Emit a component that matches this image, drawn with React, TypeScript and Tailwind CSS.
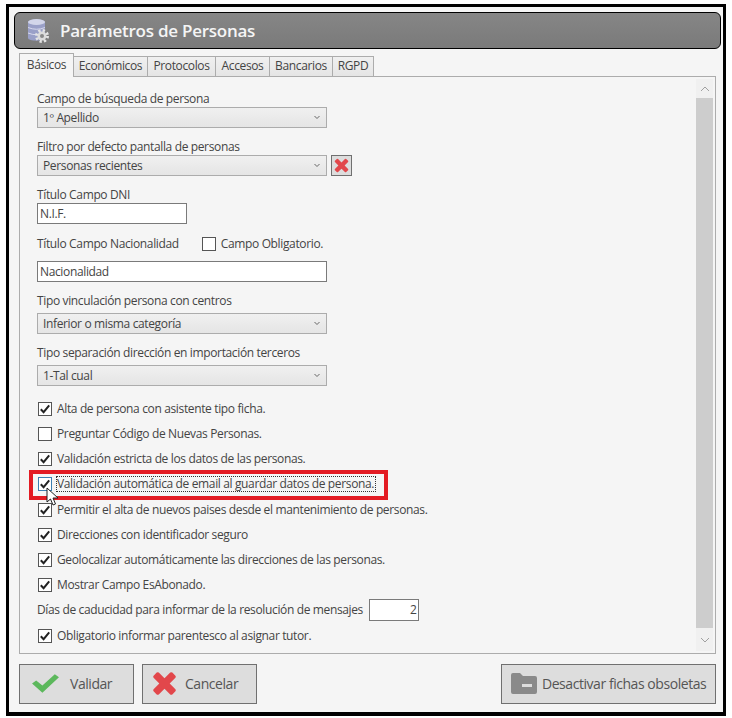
const font = { fontFamily: '"Open Sans", sans-serif' };

function Label({ children, className = '' }: { children: React.ReactNode; className?: string }) {
    return <div className={`h-4 text-[12px] leading-4 tracking-[-0.36px] text-[#444] whitespace-nowrap ${className}`}>{children}</div>;
}

function Select({ value, className = '' }: { value: string; className?: string }) {
    return (
        <div className={`flex h-[21px] w-[290px] items-center justify-between border border-[#acacac] bg-gradient-to-b from-[#f0f0f0] to-[#e5e5e5] pl-[5px] pr-[4px] text-[12px] tracking-[-0.36px] text-[#444] ${className}`}>
            <span>{value}</span>
            <svg width="6" height="5" viewBox="0 0 6 5" className="mr-[2px]">
                <path d="M.5 1 L3 3.500 L5.500 1" fill="none" stroke="#666" strokeWidth="1" />
            </svg>
        </div>
    );
}

function TextBox({ value, className = '' }: { value: string; className?: string }) {
    return (
        <div className={`flex h-[21px] items-center border border-[#7a7a7a] bg-white px-[2px] text-[12px] tracking-[-0.36px] text-[#444] ${className}`}>
            {value}
        </div>
    );
}

function Box({ checked = true, hover = false }: { checked?: boolean; hover?: boolean }) {
    return (
        <div className={`flex h-[14px] w-[14px] shrink-0 items-center justify-center border bg-white ${hover ? 'border-[#3c7fb1]' : 'border-[#555]'}`}>
            {checked && (
                <svg width="12" height="12" viewBox="0 0 12 12">
                    <path d="M1.800 6.200 L4.600 9.200 L10.200 2.400" fill="none" stroke="#222" strokeWidth="2" />
                </svg>
            )}
        </div>
    );
}

function Check({ text, checked = true, hover = false, className = '' }: { text: string; checked?: boolean; hover?: boolean; className?: string }) {
    return (
        <div className={`flex h-[16px] items-center pl-[1px] ${className}`}>
            <Box checked={checked} hover={hover} />
            <span className="ml-[5px] text-[12px] leading-4 tracking-[-0.36px] text-[#444] whitespace-nowrap">{text}</span>
        </div>
    );
}

function Tab({ text, width, active = false }: { text: string; width: string; active?: boolean }) {
    return (
        <div
            className={`flex items-center justify-center border border-[#acacac] pb-[1px] text-[12px] tracking-[-0.36px] text-[#444] ${width} ${
                active ? 'z-10 h-[24px] border-b-0 bg-[#f5f5f5]' : 'mt-[3px] h-[21px] bg-gradient-to-b from-[#f0f0f0] to-[#e5e5e5]'
            }`}
        >
            {text}
        </div>
    );
}

function Cross({ size }: { size: number }) {
    return (
        <svg width={size} height={size} viewBox="0 0 24 24">
            <path
                d="M6.500 1.500 L12 7 L17.500 1.500 Q18.500 .7 19.500 1.500 L22.500 4.500 Q23.300 5.500 22.500 6.500 L17 12 L22.500 17.500 Q23.300 18.500 22.500 19.500 L19.500 22.500 Q18.500 23.300 17.500 22.500 L12 17 L6.500 22.500 Q5.500 23.300 4.500 22.500 L1.500 19.500 Q.7 18.500 1.500 17.500 L7 12 L1.500 6.500 Q.7 5.500 1.500 4.500 L4.500 1.500 Q5.500 .7 6.500 1.500 Z"
                fill="#e2474b"
            />
        </svg>
    );
}

function ActionButton({ className, children }: { className: string; children: React.ReactNode }) {
    return (
        <div className={`flex h-10 items-center border border-[#707070] bg-[#dddddd] pb-[2px] text-[14px] tracking-[-0.45px] text-[#555] ${className}`}>
            {children}
        </div>
    );
}

export default function App() {
    return (
        <div className="h-[718px] w-[732px] bg-white pl-[6px] pt-[4px]" style={font}>
            <div className="relative h-[712px] w-[720px] border-[3px] border-b-[4px] border-black bg-[#f5f5f5] px-[5px] pt-[5px]">
                <div className="flex h-[37px] w-[707px] items-center rounded-[6px] border border-black bg-gradient-to-b from-[#868686] to-[#7a7a7a] pl-[12px]">
                    <svg width="23" height="26" viewBox="0 0 23 26">
                        <path d="M1 4 C1 .5 18 .5 18 4 L18 20 C18 23.500 1 23.500 1 20 Z" fill="#9aa0c8" />
                        <ellipse cx="9.500" cy="4" rx="8.500" ry="3" fill="#d3d6ea" />
                        <path d="M1 9.500 Q9.500 13 18 9.500 M1 15 Q9.500 18.500 18 15" fill="none" stroke="#d8daee" strokeWidth="1" />
                        <circle cx="15" cy="18" r="5.500" fill="none" stroke="#e4e4e4" strokeWidth="3" strokeDasharray="2.200 2.120" />
                        <circle cx="15" cy="18" r="4.500" fill="#dcdcdc" />
                        <circle cx="15" cy="18" r="2" fill="#8a8a8a" />
                    </svg>
                    <span className="ml-[10px] text-[17px] font-semibold tracking-[-0.25px] text-[#f5f5f5]">Parámetros de Personas</span>
                </div>

                <div className="relative ml-[5px] mt-[4px] flex h-[24px] gap-0">
                    <Tab text="Básicos" width="w-[55px]" active />
                    <Tab text="Económicos" width="w-[75px] -ml-[1px]" />
                    <Tab text="Protocolos" width="w-[69px] -ml-[1px]" />
                    <Tab text="Accesos" width="w-[55px] -ml-[1px]" />
                    <Tab text="Bancarios" width="w-[64px] -ml-[1px]" />
                    <Tab text="RGPD" width="w-[42px] -ml-[1px]" />
                </div>

                <div className="relative ml-[5px] -mt-[1px] flex h-[578px] w-[697px] border border-[#acacac] bg-[#f5f5f5]">
                    <div className="w-[676px] pl-[17px]">
                        <Label className="mt-[14px]">Campo de búsqueda de persona</Label>
                        <Select value="1º Apellido" />
                        <Label className="mt-[11px]">Filtro por defecto pantalla de personas</Label>
                        <div className="flex items-center gap-[4px]">
                            <Select value="Personas recientes" />
                            <div className="flex h-[21px] w-[21px] items-center justify-center border border-[#707070] bg-[#dddddd]">
                                <Cross size={15} />
                            </div>
                        </div>
                        <Label className="mt-[11px]">Título Campo DNI</Label>
                        <TextBox value="N.I.F." className="w-[150px]" />
                        <div className="mt-[12px] flex h-[16px] items-center">
                            <Label>Título Campo Nacionalidad</Label>
                            <div className="ml-[23px]"><Box checked={false} /></div>
                            <Label className="ml-[5px]">Campo Obligatorio.</Label>
                        </div>
                        <TextBox value="Nacionalidad" className="mt-[9px] w-[290px]" />
                        <Label className="mt-[11px]">Tipo vinculación persona con centros</Label>
                        <Select value="Inferior o misma categoría" className="mt-[4px]" />
                        <Label className="mt-[11px]">Tipo separación dirección en importación terceros</Label>
                        <Select value="1-Tal cual" className="mt-[4px]" />

                        <Check text="Alta de persona con asistente tipo ficha." className="mt-[15px]" />
                        <Check text="Preguntar Código de Nuevas Personas." checked={false} className="mt-[9px]" />
                        <Check text="Validación estricta de los datos de las personas." className="mt-[9px]" />
                        <div className="relative mt-[9px]">
                            <Check text="Validación automática de email al guardar datos de persona." hover />
                            <div className="absolute left-[19px] top-[0px] h-[16px] w-[320px] border border-dotted border-[#333]" />
                        </div>
                        <Check text="Permitir el alta de nuevos paises desde el mantenimiento de personas." className="mt-[10px]" />
                        <Check text="Direcciones con identificador seguro" className="mt-[9px]" />
                        <Check text="Geolocalizar automáticamente las direcciones de las personas." className="mt-[9px]" />
                        <Check text="Mostrar Campo EsAbonado." className="mt-[9px]" />
                        <div className="mt-[6px] flex h-[22px] items-center">
                            <Label>Días de caducidad para informar de la resolución de mensajes</Label>
                            <div className="ml-[6px] flex h-[22px] w-[50px] items-center justify-end border border-[#7a7a7a] bg-white pr-[1px] text-[12px] text-[#444]">2</div>
                        </div>
                        <Check text="Obligatorio informar parentesco al asignar tutor." className="mt-[7px]" />
                    </div>
                    <div className="mt-[2px] flex h-[572px] w-[17px] flex-col items-center bg-[#f0f0f0]">
                        <div className="flex h-[19px] items-center">
                            <svg width="10" height="6" viewBox="0 0 10 6"><path d="M1 5 L5 1 L9 5" fill="none" stroke="#a0a0a0" strokeWidth="1" /></svg>
                        </div>
                        <div className="h-[530px] w-full bg-[#cdcdcd]" />
                        <div className="flex h-[23px] items-center">
                            <svg width="10" height="6" viewBox="0 0 10 6"><path d="M1 1 L5 5 L9 1" fill="none" stroke="#a0a0a0" strokeWidth="1" /></svg>
                        </div>
                    </div>
                </div>

                <div className="ml-[5px] mt-[10px] flex w-[697px]">
                    <ActionButton className="w-[115px]">
                        <svg width="29" height="21" viewBox="0 0 28 20" className="ml-[11px]">
                            <path d="M1 10 L5 7 L11 12 L23 1 L27 4 L11 19 Z" fill="#5cb85c" />
                        </svg>
                        <span className="ml-[10px]">Validar</span>
                    </ActionButton>
                    <ActionButton className="ml-[8px] w-[115px]">
                        <span className="ml-[9px]"><Cross size={25} /></span>
                        <span className="ml-[8px]">Cancelar</span>
                    </ActionButton>
                    <ActionButton className="ml-auto w-[215px]">
                        <svg width="26" height="21" viewBox="0 0 26 21" className="ml-[9px]">
                            <path d="M2 0 H9 L12 3 H24 Q26 3 26 5 V19 Q26 21 24 21 H2 Q0 21 0 19 V2 Q0 0 2 0 Z" fill="#8a8a8a" />
                            <rect x="11" y="11" width="10" height="3" fill="#dddddd" />
                        </svg>
                        <span className="ml-[5px]">Desactivar fichas obsoletas</span>
                    </ActionButton>
                </div>

                <div className="absolute left-[20px] top-[463px] h-[30px] w-[359px] border-[4px] border-[#e31b23]" />
                <svg width="14" height="20" viewBox="0 0 14 20" className="absolute left-[37px] top-[480px]">
                    <path d="M1 1 L1 15 L4.500 12 L7 18 L9.500 17 L7 11 L12 11 Z" fill="#fff" stroke="#222" strokeWidth="1" />
                </svg>
            </div>
        </div>
    );
}
